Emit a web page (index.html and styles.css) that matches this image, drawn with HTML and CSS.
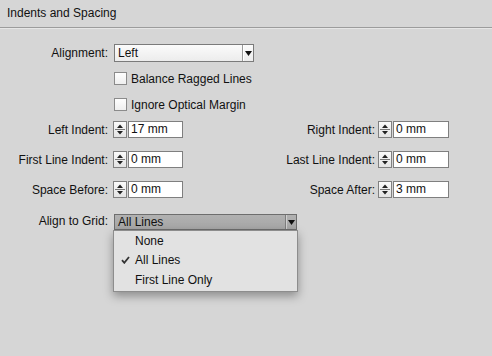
FILE: index.html
```html
<!doctype html>
<html lang="en">
<head>
<meta charset="utf-8">
<title>Indents and Spacing</title>
<link rel="stylesheet" href="styles.css">
</head>
<body>
	<div class="panel">
		<div class="header">Indents and Spacing</div>

		<div class="form">
			<div class="row row-align">
				<span class="label">Alignment:</span>
				<div class="select select-wide">
					<span class="select-text">Left</span>
					<span class="select-arrow"><svg width="7" height="5" viewBox="0 0 7 5"><path d="M0 0h7L3.5 5z" fill="#111"/></svg></span>
				</div>
			</div>

			<div class="row row-check1">
				<span class="label"></span>
				<span class="checkbox"></span>
				<span class="check-text">Balance Ragged Lines</span>
			</div>
			<div class="row row-check2">
				<span class="label"></span>
				<span class="checkbox"></span>
				<span class="check-text">Ignore Optical Margin</span>
			</div>

			<div class="row row-num first">
				<span class="label">Left Indent:</span>
				<span class="spinner"><svg width="12" height="15" viewBox="0 0 12 15"><path d="M6 2.5l3 3.5H3z" fill="#222"/><path d="M1 7.5h10" stroke="#777"/><path d="M6 12.5l3-3.5H3z" fill="#222"/></svg></span>
				<span class="field">17 mm</span>
				<span class="label-right">Right Indent:</span>
				<span class="spinner"><svg width="12" height="15" viewBox="0 0 12 15"><path d="M6 2.5l3 3.5H3z" fill="#222"/><path d="M1 7.5h10" stroke="#777"/><path d="M6 12.5l3-3.5H3z" fill="#222"/></svg></span>
				<span class="field field-right">0 mm</span>
			</div>
			<div class="row row-num">
				<span class="label">First Line Indent:</span>
				<span class="spinner"><svg width="12" height="15" viewBox="0 0 12 15"><path d="M6 2.5l3 3.5H3z" fill="#222"/><path d="M1 7.5h10" stroke="#777"/><path d="M6 12.5l3-3.5H3z" fill="#222"/></svg></span>
				<span class="field">0 mm</span>
				<span class="label-right">Last Line Indent:</span>
				<span class="spinner"><svg width="12" height="15" viewBox="0 0 12 15"><path d="M6 2.5l3 3.5H3z" fill="#222"/><path d="M1 7.5h10" stroke="#777"/><path d="M6 12.5l3-3.5H3z" fill="#222"/></svg></span>
				<span class="field field-right">0 mm</span>
			</div>
			<div class="row row-num">
				<span class="label">Space Before:</span>
				<span class="spinner"><svg width="12" height="15" viewBox="0 0 12 15"><path d="M6 2.5l3 3.5H3z" fill="#222"/><path d="M1 7.5h10" stroke="#777"/><path d="M6 12.5l3-3.5H3z" fill="#222"/></svg></span>
				<span class="field">0 mm</span>
				<span class="label-right">Space After:</span>
				<span class="spinner"><svg width="12" height="15" viewBox="0 0 12 15"><path d="M6 2.5l3 3.5H3z" fill="#222"/><path d="M1 7.5h10" stroke="#777"/><path d="M6 12.5l3-3.5H3z" fill="#222"/></svg></span>
				<span class="field field-right">3 mm</span>
			</div>

			<div class="row row-grid">
				<span class="label">Align to Grid:</span>
				<div class="select-wrap">
					<div class="select select-grid">
						<span class="select-text">All Lines</span>
						<span class="select-arrow"><svg width="7" height="5" viewBox="0 0 7 5"><path d="M0 0h7L3.5 5z" fill="#111"/></svg></span>
					</div>
					<div class="menu">
						<div class="menu-item"><span class="tick"></span>None</div>
						<div class="menu-item"><span class="tick"><svg width="9" height="8" viewBox="0 0 9 8"><path d="M1 4.2l2.3 2.6L8 1" stroke="#333" stroke-width="1.8" fill="none"/></svg></span>All Lines</div>
						<div class="menu-item"><span class="tick"></span>First Line Only</div>
					</div>
				</div>
			</div>
		</div>
	</div>
</body>
</html>
```

FILE: styles.css
```css
body, html {
	margin: 0;
}

body {
	width: 492px;
	height: 356px;
	background: #d6d6d6;
	font-family: "Liberation Sans", Arial, sans-serif;
	font-size: 12px;
	color: #111;
	overflow: hidden;
}

/* header */
.header {
	height: 27px;
	line-height: 26px;
	padding-left: 7px;
	font-size: 12px;
	border-bottom: 1px solid #9c9c9c;
	box-shadow: 0 1px 0 #e6e6e6;
	margin-bottom: 1px;
}

/* form rows */
.form {
	display: flex;
	flex-direction: column;
}
.row {
	display: flex;
	align-items: center;
}
.label {
	width: 108px;
	text-align: right;
	margin-right: 5px;
	white-space: nowrap;
}
.label-right {
	width: 192px;
	text-align: right;
	margin-right: 3px;
	white-space: nowrap;
}

.row-align {
	margin-top: 15px;
	height: 18px;
}
.row-check1 {
	margin-top: 10px;
	height: 13px;
}
.row-check2 {
	margin-top: 13px;
	height: 13px;
}
.row-num {
	margin-top: 13px;
	height: 17px;
}
.row-num.first {
	margin-top: 10px;
}
.row-grid {
	margin-top: 16px;
	height: 16px;
	align-items: flex-start;
}

/* selects */
.select {
	display: flex;
	align-items: center;
	box-sizing: border-box;
	border: 1px solid #7b7b7b;
	background: linear-gradient(#fbfbfb, #ececec);
	margin-left: 1px;
}
.select-wide {
	width: 140px;
	height: 18px;
}
.select-text {
	flex: 1;
	padding-left: 3px;
}
.select-arrow {
	width: 10px;
	height: 100%;
	display: flex;
	align-items: center;
	justify-content: center;
	border-left: 1px solid #9a9a9a;
	box-shadow: inset 1px 0 0 #fff;
}
.select-grid {
	width: 183px;
	height: 16px;
	background: linear-gradient(#b1b1b1, #a6a6a6);
	border-color: #6e6e6e;
}
.select-grid .select-arrow {
	border-left: 1px solid #7d7d7d;
	box-shadow: inset 1px 0 0 #d0d0d0;
}
.select-wrap {
	position: relative;
}

/* checkboxes */
.checkbox {
	box-sizing: border-box;
	width: 13px;
	height: 13px;
	margin-left: 1px;
	border: 1px solid #8b8b8b;
	background: linear-gradient(#fefefe, #efefef);
}
.check-text {
	margin-left: 4px;
}

/* spinners + fields */
.spinner {
	box-sizing: border-box;
	width: 14px;
	height: 17px;
	border: 1px solid #808080;
	background: linear-gradient(#fafafa, #e3e3e3);
	display: flex;
}
.field {
	box-sizing: border-box;
	width: 55px;
	height: 17px;
	margin-left: 1px;
	border: 1px solid #7f7f7f;
	background: #fff;
	padding-left: 2px;
	line-height: 15px;
}
.field-right {
	width: 56px;
}

/* drop menu */
.menu {
	position: absolute;
	left: 0;
	top: 16px;
	width: 185px;
	box-sizing: border-box;
	background: #e2e2e2;
	border: 1px solid #8d8d8d;
	box-shadow: 0 4px 9px rgba(0, 0, 0, 0.35);
	padding: 0 0 1px;
}
.menu-item {
	display: flex;
	align-items: center;
	height: 19.5px;
}
.tick {
	width: 21px;
	display: flex;
	box-sizing: border-box;
	padding-left: 7px;
}
```
